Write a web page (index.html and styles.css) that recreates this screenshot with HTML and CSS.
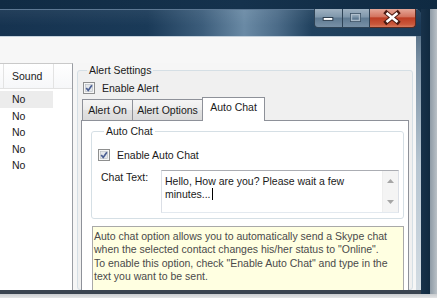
FILE: index.html
```html
<!DOCTYPE html>
<html>
<head>
<meta charset="utf-8">
<link rel="stylesheet" href="styles.css">
</head>
<body>
<div class="screen">
  <div class="desk-top"></div>
  <div class="win-row">
    <div class="window">
      <div class="titlebar">
        <div class="caption-btns">
          <div class="cbtn min">
            <svg width="29" height="19" viewBox="0 0 29 19"><rect x="9.5" y="9.5" width="10" height="3" fill="#fff" stroke="#2b3c4c"/></svg>
          </div>
          <div class="cbtn max">
            <svg width="27" height="19" viewBox="0 0 27 19"><rect x="8.5" y="5.5" width="10" height="8" fill="none" stroke="#3b5266"/><rect x="9.5" y="6.5" width="8" height="6" fill="none" stroke="#b9c7d3" stroke-width="1.4" opacity=".8"/></svg>
          </div>
          <div class="cbtn close">
            <svg width="46" height="19" viewBox="0 0 46 19"><path d="M17.5 5 L28.5 14 M28.5 5 L17.5 14" stroke="#4a1a12" stroke-width="4.6" stroke-linecap="square"/><path d="M17.5 5 L28.5 14 M28.5 5 L17.5 14" stroke="#fff" stroke-width="2.6"/></svg>
          </div>
        </div>
      </div>
      <div class="client">
        <div class="topstrip"></div>
        <div class="main">
          <div class="list">
            <div class="list-head">
              <div class="hcell c0"></div>
              <div class="hcell c1">Sound</div>
              <div class="hcell c2"></div>
            </div>
            <div class="rows">
              <div class="row sel">No</div>
              <div class="row">No</div>
              <div class="row">No</div>
              <div class="row">No</div>
              <div class="row">No</div>
            </div>
          </div>
          <fieldset class="group alert-group">
            <legend>Alert Settings</legend>
            <div class="chk-row">
              <svg class="chk" width="12" height="12" viewBox="0 0 12 12"><rect x=".5" y=".5" width="11" height="11" fill="#f6f6f6" stroke="#8e8f8f"/><rect x="2.5" y="2.5" width="7" height="7" fill="#e4e7eb" stroke="#b4b9c0" stroke-width=".6"/><path d="M3.2 6 L5.2 8.4 L8.9 3.2" fill="none" stroke="#4b5f93" stroke-width="1.7"/></svg>
              <span>Enable Alert</span>
            </div>
            <div class="tabs">
              <div class="tab t1">Alert On</div>
              <div class="tab t2">Alert Options</div>
              <div class="tab t3 active">Auto Chat</div>
            </div>
            <div class="tab-panel">
              <fieldset class="group chat-group">
                <legend>Auto Chat</legend>
                <div class="chk-row inner">
                  <svg class="chk" width="12" height="12" viewBox="0 0 12 12"><rect x=".5" y=".5" width="11" height="11" fill="#f6f6f6" stroke="#8e8f8f"/><rect x="2.5" y="2.5" width="7" height="7" fill="#e4e7eb" stroke="#b4b9c0" stroke-width=".6"/><path d="M3.2 6 L5.2 8.4 L8.9 3.2" fill="none" stroke="#4b5f93" stroke-width="1.7"/></svg>
                  <span>Enable Auto Chat</span>
                </div>
                <div class="chat-row">
                  <div class="chat-label">Chat Text:</div>
                  <div class="textbox">
                    <div class="tb-text">Hello, How are you? Please wait a few minutes...<span class="caret"></span></div>
                    <div class="vscroll">
                      <svg width="7" height="4" viewBox="0 0 7 4"><path d="M0 4 L3.5 0 L7 4 Z" fill="#a6a6a6"/></svg>
                      <svg width="7" height="4" viewBox="0 0 7 4"><path d="M0 0 L3.5 4 L7 0 Z" fill="#a6a6a6"/></svg>
                    </div>
                  </div>
                </div>
              </fieldset>
              <div class="info">Auto chat option allows you to automatically send a Skype chat<br>when the selected contact changes his/her status to "Online".<br>To enable this option, check "Enable Auto Chat" and type in the<br>text you want to be sent.</div>
            </div>
          </fieldset>
        </div>
      </div>
    </div>
    <div class="desk-right"></div>
  </div>
  <div class="desk-bottom"></div>
</div>
</body>
</html>
```

FILE: styles.css
```css
* { box-sizing: border-box; }
html, body { margin: 0; padding: 0; }
body {
  width: 437px; height: 298px; overflow: hidden;
  font-family: "Liberation Sans", Arial, sans-serif;
  font-size: 10.5px; color: #1a1a1a;
}
.screen { width: 437px; height: 298px; display: flex; flex-direction: column; background: #d6d9dc; }
.desk-top { height: 9px; flex: none; background: linear-gradient(90deg, #102b44, #15324d 55%, #0f2a42); }
.win-row { display: flex; height: 285px; flex: none; background: #0f2a42; }
.desk-right { flex: 1; background: linear-gradient(90deg, #18324a 0, #112a40 9px, #8e9ba6 9px, #b9c0c6 100%); }
.desk-bottom { flex: 1; background: linear-gradient(#c9cccf, #e4e5e6); }

.window {
  width: 421px; flex: none; display: flex; flex-direction: column;
  border-top-right-radius: 6px; overflow: hidden;
  background: linear-gradient(180deg, #3e5a74 0, #7d93a6 20%, #b6c5d1 55%, #d3dce3 100%);
  border-bottom: 4px solid #3a4450;
}
.titlebar {
  height: 27px; flex: none; display: flex; justify-content: flex-end; align-items: flex-start;
  border-top: 1px solid #5d7893;
  background:
    linear-gradient(180deg, rgba(255,255,255,0.06), rgba(0,0,0,0) 60%),
    linear-gradient(90deg, #163350 0%, #1a3a58 35%, #3c5d7b 48%, #6a8aa5 58%, #4b6b88 66%, #21425f 74%, #1b3a57 100%);
}
.caption-btns { display: flex; margin-right: 5px; margin-top: -1px; }
.cbtn { height: 19px; border: 1px solid #2e4356; border-top: none; display: flex; }
.cbtn svg { display: block; margin: -1px 0 0 -1px; }
.cbtn.min {
  width: 29px; border-bottom-left-radius: 4px;
  background: linear-gradient(180deg, #9fb1c1 0%, #7f97ab 45%, #5f7a92 50%, #7790a6 100%);
}
.cbtn.max {
  width: 27px; border-left: none;
  background: linear-gradient(180deg, #9fb1c1 0%, #7f97ab 45%, #5f7a92 50%, #7790a6 100%);
}
.cbtn.close {
  width: 46px; border-left: none; border-bottom-right-radius: 4px; border-color: #5a2a20;
  background: linear-gradient(180deg, #e5a798 0%, #d47560 42%, #bd3e25 50%, #c9573b 85%, #d77a5e 100%);
}

.client {
  flex: 1; min-height: 0; margin-right: 5px;
  border-top: 1px solid #c5d2dd;
  background: #f6f6f6;
  display: flex; flex-direction: column; overflow: hidden;
}
.topstrip { height: 26px; flex: none; background: #f7f7f7; }
.main { flex: 1; min-height: 0; display: flex; align-items: flex-start; }

.list {
  width: 73px; flex: none; align-self: stretch;
  background: #fff; border-right: 1px solid #9a9da3; border-top: 1px solid #c9c9c9;
}
.list-head { height: 25px; display: flex; border-bottom: 1px solid #e2e2e2; background: linear-gradient(#ffffff, #f6f7f9); }
.hcell { border-right: 1px solid #e3e3e3; line-height: 25px; }
.hcell.c0 { width: 4px; }
.hcell.c1 { width: 50px; padding-left: 8px; }
.hcell.c2 { flex: 1; border-right: none; }
.rows { padding-top: 2px; }
.row { height: 16.5px; line-height: 16.5px; padding-left: 12px; width: 53px; }
.row.sel { background: #ececec; }

.group {
  margin: 0; min-width: 0;
  border: 1px solid #d5dfe5; border-radius: 3px;
}
.group legend { margin-left: 6px; padding: 0 2px; line-height: 12px; }

.alert-group {
  flex: 1; margin: 1px 3px 0 4px; padding: 0 3px 0 3px;
  background: #f0f0f0; align-self: stretch;
}
.chk-row { display: flex; align-items: center; gap: 7px; height: 13px; margin-top: 5px; margin-left: 2px; }
.chk { display: block; flex: none; }

.tabs { display: flex; align-items: flex-end; margin-top: 3px; height: 23px; padding-left: 1px; }
.tab {
  height: 21px; line-height: 20px; text-align: center;
  border: 1px solid #8e9199; border-bottom: none;
  background: linear-gradient(180deg, #f5f5f5 0%, #ececec 50%, #e2e2e2 51%, #dadada 100%);
}
.tab.t1 { width: 51px; }
.tab.t2 { width: 71px; margin-left: -1px; }
.tab.t3 { width: 63px; margin-left: -1px; }
.tab.active {
  height: 24px; line-height: 19px; background: #fff; position: relative; z-index: 1;
  margin-bottom: -1px;
}
.tab-panel {
  border: 1px solid #8e9199; background: #fff; height: 220px;
  padding: 4px 4px 0 9px;
}
.chat-group { padding: 0 4px 5px 6px; }
.chk-row.inner { margin-top: 11px; margin-left: 0; }
.chat-row { display: flex; margin-top: 9px; }
.chat-label { width: 63px; padding-left: 3px; line-height: 12px; margin-top: 1px; }
.textbox {
  flex: 1; height: 43px; display: flex;
  border: 1px solid #dbdfe6; border-top-color: #abadb3; border-bottom-color: #e3e9ef;
  background: #fff;
}
.tb-text { flex: 1; padding: 4px 3px; line-height: 12.5px; }
.caret { display: inline-block; width: 1px; height: 12px; background: #000; vertical-align: -2px; margin-left: 1px; }
.vscroll {
  width: 16px; flex: none; background: #f4f4f4; border-left: 1px solid #eeeeee;
  display: flex; flex-direction: column; align-items: center; justify-content: space-between;
  padding: 8px 0 8px;
}
.vscroll svg { display: block; }
.info {
  margin: 7px 0 0 1px; height: 90px;
  border: 1px solid #a9a9a9; background: #ffffe1; color: #4a4a4a;
  padding: 3px 1px 1px; line-height: 13.3px; white-space: nowrap;
}
```
